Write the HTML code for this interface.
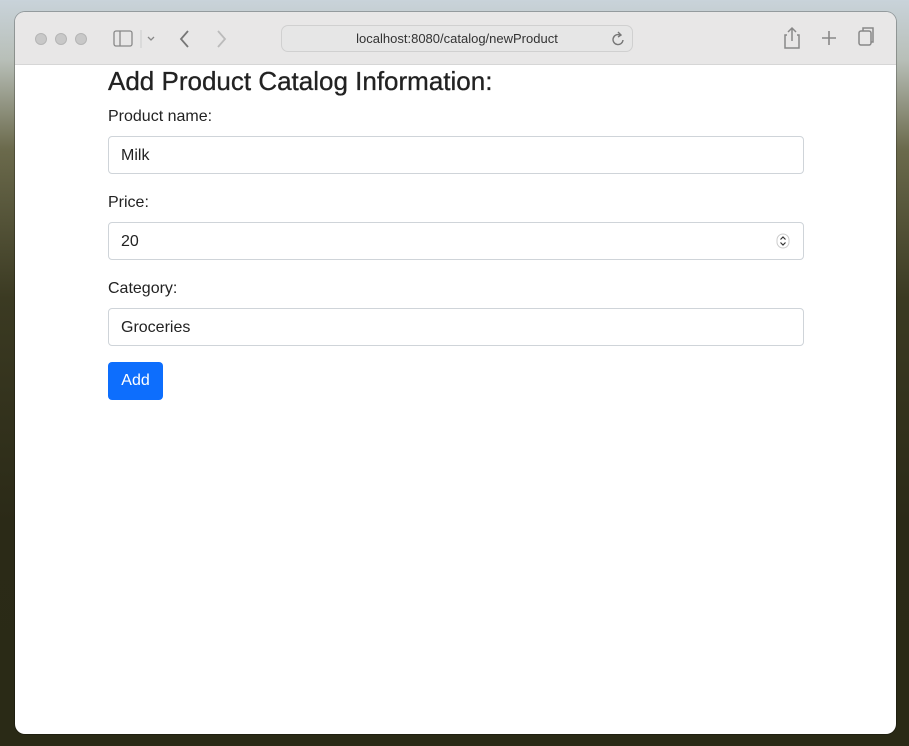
<!DOCTYPE html>
<html><head><style>
*{box-sizing:border-box;margin:0;padding:0}
html,body{width:909px;height:746px;overflow:hidden}
body{position:relative;font-family:"Liberation Sans",sans-serif;
background:linear-gradient(180deg,#c9d3da 0%,#b8bfb8 8%,#6b6a4c 20%,#3b3a22 40%,#2b2a17 70%,#2a2a16 100%)}
.win{position:absolute;left:15px;top:12px;width:881px;height:722px;background:#fff;border-radius:10px;overflow:hidden;box-shadow:0 0 0 1px rgba(0,0,0,.25)}
.bar{height:53px;background:#e8e7e7;border-bottom:1px solid #d6d6d6;position:relative}
.dot{position:absolute;top:21px;width:12px;height:12px;border-radius:50%;background:#c8c8c8;border:1px solid #b5b5b5}
.url{position:absolute;left:266px;top:13px;width:352px;height:27px;border:1px solid #d0d0d0;border-radius:7px;background:#e6e6e6;font-size:13px;color:#333;text-align:center;line-height:25px}
h1{position:absolute;left:93px;top:54px;font-size:26px;font-weight:normal;color:#222;-webkit-text-stroke:0.3px #222}
label{position:absolute;left:93px;font-size:16px;color:#222}
.in{position:absolute;left:93px;width:696px;height:38px;border:1px solid #cfd4d9;border-radius:4px;font-size:16px;color:#222;padding-left:12px;line-height:37px}
.btn{position:absolute;left:93px;top:350px;width:55px;height:38px;background:#0d6efd;border-radius:4px;color:#fff;font-size:16px;text-align:center;line-height:38px}
svg{position:absolute}
</style></head><body>
<div class="win">
<div class="bar">
<div class="dot" style="left:20px"></div><div class="dot" style="left:40px"></div><div class="dot" style="left:60px"></div>
<svg style="left:98px;top:18px" width="48" height="18" viewBox="0 0 48 18"><rect x="1" y="1" width="18" height="15" rx="2" fill="none" stroke="#888" stroke-width="1.3"/><line x1="7" y1="1" x2="7" y2="16" stroke="#888" stroke-width="1.3"/><line x1="28" y1="0" x2="28" y2="18" stroke="#ccc"/><path d="M35 7l3 3 3-3" fill="none" stroke="#888" stroke-width="1.3"/></svg>
<svg style="left:163px;top:17px" width="50" height="20" viewBox="0 0 50 20"><path d="M10 2l-7 8 7 8" fill="none" stroke="#777" stroke-width="1.8"/><path d="M40 2l7 8-7 8" fill="none" stroke="#bbb" stroke-width="1.8"/></svg>
<div class="url">localhost:8080/catalog/newProduct</div>
<svg style="left:597px;top:19px" width="14" height="16" viewBox="0 0 14 16"><path d="M11 9a5 5 0 1 1-3-5" fill="none" stroke="#777" stroke-width="1.4"/><path d="M6 1l3 3-3 2" fill="none" stroke="#777" stroke-width="1.4"/></svg>
<svg style="left:768px;top:14px" width="100" height="24" viewBox="0 0 100 24"><path d="M4 9H2v13h14V9h-2M9 15V2M5 6l4-4 4 4" fill="none" stroke="#888" stroke-width="1.5"/><path d="M46 5v14M39 12h14" stroke="#888" stroke-width="1.6"/><rect x="76" y="5" width="12" height="14" rx="2" fill="none" stroke="#888" stroke-width="1.5"/><path d="M80 5V2h10v14h-2" fill="none" stroke="#888" stroke-width="1.5"/></svg>
</div>
<h1>Add Product Catalog Information:</h1>
<label style="top:96px">Product name:</label>
<div class="in" style="top:124px">Milk</div>
<label style="top:182px">Price:</label>
<div class="in" style="top:210px">20</div>
<svg style="left:761px;top:221px" width="14" height="16" viewBox="0 0 14 16"><rect x="1" y="1" width="12" height="14" rx="6" fill="none" stroke="#ccc"/><path d="M4.5 6.5L7 4l2.5 2.5M4.5 9.5L7 12l2.5-2.5" fill="none" stroke="#333" stroke-width="1.2"/></svg>
<label style="top:268px">Category:</label>
<div class="in" style="top:296px">Groceries</div>
<div class="btn">Add</div>
</div>
</body></html>
